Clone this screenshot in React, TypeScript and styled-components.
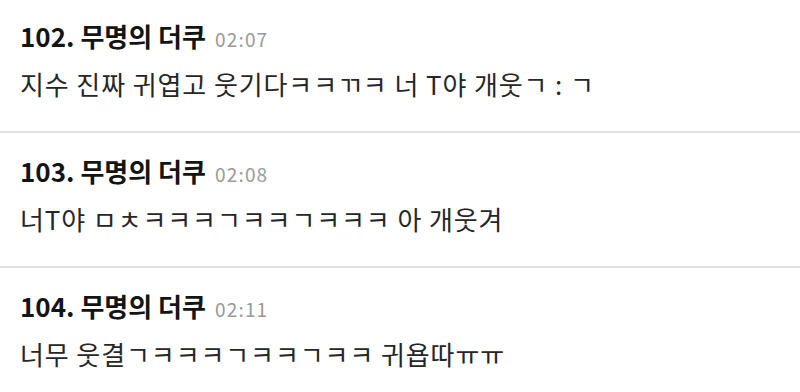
import { createGlobalStyle } from "styled-components"
import styled from "styled-components"

const GlobalStyle = createGlobalStyle`
  body {
    margin: 0;
    background: #ffffff;
    font-family: "Noto Sans CJK KR", "Noto Sans", sans-serif;
  }
`

type Comment = {
  no: number;
  name: string;
  time: string;
  body: string;
}

const comments: Comment[] = [
  { no: 102, name: "무명의 더쿠", time: "02:07", body: "지수 진짜 귀엽고 웃기다ㅋㅋㄲㅋ 너 T야 개웃ㄱ : ㄱ" },
  { no: 103, name: "무명의 더쿠", time: "02:08", body: "너T야 ㅁㅊㅋㅋㅋㄱㅋㅋㄱㅋㅋㅋ 아 개웃겨" },
  { no: 104, name: "무명의 더쿠", time: "02:11", body: "너무 웃결ㄱㅋㅋㅋㄱㅋㅋㄱㅋㅋ 귀욥따ㅠㅠ" },
]

// list is scrolled a couple of pixels past the top of the first comment
const List = styled.div`
  width: 800px;
  margin-top: -2px;
  display: flex;
  flex-direction: column;
`

const Item = styled.div`
  height: 135px;
  box-sizing: border-box;
  padding: 22px 20px 0;
  border-bottom: 2px solid #e2e2e2;

  &:last-child {
    border-bottom: none;
  }
`

const Header = styled.div`
  display: flex;
  align-items: baseline;
  gap: 9px;
  height: 32px;
  line-height: 32px;
`

const Title = styled.span`
  font-size: 26px;
  font-weight: 700;
  color: #141414;
  letter-spacing: 0;
`

const Time = styled.span`
  font-size: 19px;
  color: #9a9a9a;
  letter-spacing: 1.2px;
`

const Body = styled.p`
  margin: 16px 0 0;
  font-size: 26px;
  line-height: 32px;
  color: #262626;
  letter-spacing: 0.9px;
`

export default function App() {
  return (
    <>
      <GlobalStyle />
      <List>
        {comments.map((c) => (
          <Item key={c.no}>
            <Header>
              <Title>{c.no}. {c.name}</Title>
              <Time>{c.time}</Time>
            </Header>
            <Body>{c.body}</Body>
          </Item>
        ))}
      </List>
    </>
  )
}
